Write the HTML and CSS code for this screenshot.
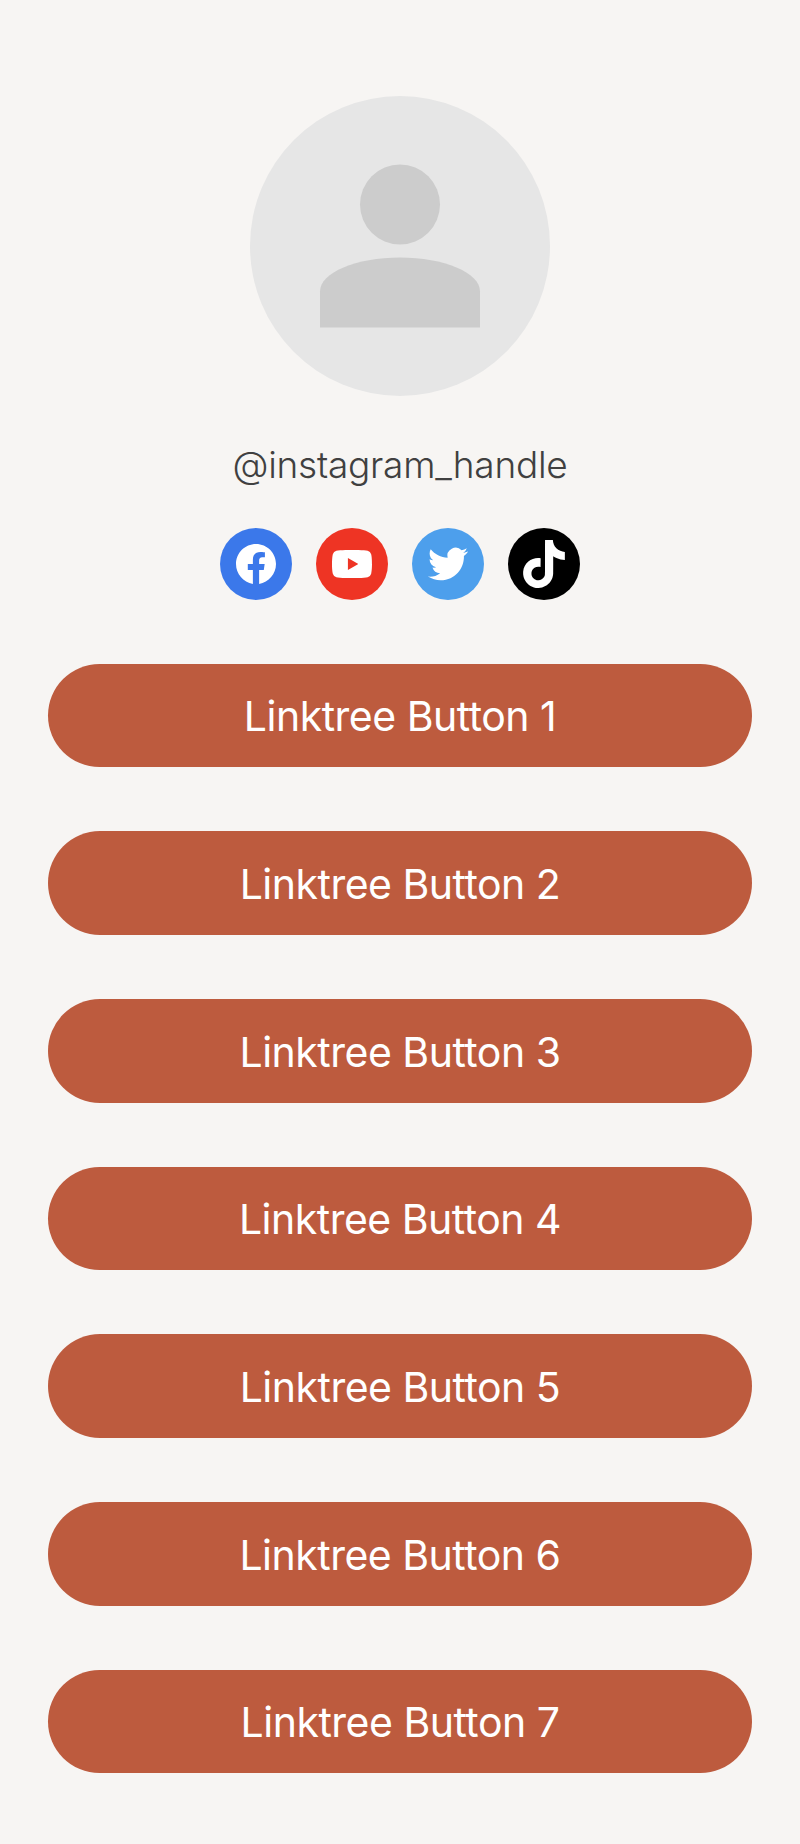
FILE: index.html
```html
<!DOCTYPE html>
<html lang="en">
<head>
<meta charset="utf-8">
<title>Linktree</title>
<link rel="stylesheet" href="styles.css">
</head>
<body>
<main class="page">
  <svg class="avatar" viewBox="0 0 300 300" aria-hidden="true">
    <circle class="avatar-bg" cx="150" cy="150" r="150"/>
    <circle class="avatar-fg" cx="150" cy="108.5" r="40"/>
    <path class="avatar-fg" d="M70 231.5V195.5C70 176.5 106 161.5 150 161.5S230 176.5 230 195.5V231.5Z"/>
  </svg>
  <p class="handle">@instagram_handle</p>
  <div class="socials">
    <a class="social facebook" href="#"><svg class="glyph" viewBox="0 0 24 24"><path d="M24 12.073c0-6.627-5.373-12-12-12s-12 5.373-12 12c0 5.99 4.388 10.954 10.125 11.854v-8.385H7.078v-3.47h3.047V9.43c0-3.007 1.792-4.669 4.533-4.669 1.312 0 2.686.235 2.686.235v2.953H15.83c-1.491 0-1.956.925-1.956 1.874v2.25h3.328l-.532 3.47h-2.796v8.385C19.612 23.027 24 18.062 24 12.073z"/></svg></a>
    <a class="social youtube" href="#"><svg class="glyph" viewBox="0 0 24 24"><path d="M23.498 6.186a3.016 3.016 0 0 0-2.122-2.136C19.505 3.545 12 3.545 12 3.545s-7.505 0-9.377.505A3.017 3.017 0 0 0 .502 6.186C0 8.07 0 12 0 12s0 3.93.502 5.814a3.016 3.016 0 0 0 2.122 2.136c1.871.505 9.376.505 9.376.505s7.505 0 9.377-.505a3.015 3.015 0 0 0 2.122-2.136C24 15.93 24 12 24 12s0-3.93-.502-5.814zM9.545 15.568V8.432L15.818 12l-6.273 3.568z"/></svg></a>
    <a class="social twitter" href="#"><svg class="glyph" viewBox="0 0 24 24"><path d="M23.953 4.57a10 10 0 01-2.825.775 4.958 4.958 0 002.163-2.723c-.951.555-2.005.959-3.127 1.184a4.92 4.92 0 00-8.384 4.482C7.69 8.095 4.067 6.13 1.64 3.162a4.822 4.822 0 00-.666 2.475c0 1.71.87 3.213 2.188 4.096a4.904 4.904 0 01-2.228-.616v.06a4.923 4.923 0 003.946 4.827 4.996 4.996 0 01-2.212.085 4.936 4.936 0 004.604 3.417 9.867 9.867 0 01-6.102 2.105c-.39 0-.779-.023-1.17-.067a13.995 13.995 0 007.557 2.209c9.053 0 13.998-7.496 13.998-13.985 0-.21 0-.42-.015-.63A9.935 9.935 0 0024 4.59z"/></svg></a>
    <a class="social tiktok" href="#"><svg class="glyph glyph-tall" viewBox="0 0 24 24"><path d="M12.525.02c1.31-.02 2.61-.01 3.91-.02.08 1.53.63 3.09 1.75 4.17 1.12 1.11 2.7 1.62 4.24 1.79v4.03c-1.44-.05-2.89-.35-4.2-.97-.57-.26-1.1-.59-1.62-.93-.01 2.92.01 5.84-.02 8.75-.08 1.4-.54 2.79-1.35 3.94-1.31 1.92-3.58 3.17-5.91 3.21-1.43.08-2.86-.31-4.08-1.03-2.02-1.19-3.44-3.37-3.65-5.71-.02-.5-.03-1-.01-1.49.18-1.9 1.12-3.72 2.58-4.96 1.66-1.44 3.98-2.13 6.15-1.72.02 1.48-.04 2.96-.04 4.44-.99-.32-2.15-.23-3.02.37-.63.41-1.11 1.04-1.36 1.75-.21.51-.15 1.07-.14 1.61.24 1.64 1.82 3.02 3.5 2.87 1.12-.01 2.19-.66 2.77-1.61.19-.33.4-.67.41-1.06.1-1.79.06-3.57.07-5.36.01-4.03-.01-8.05.02-12.07z"/></svg></a>
  </div>
  <nav class="links">
    <a class="link" href="#">Linktree Button 1</a>
    <a class="link" href="#">Linktree Button 2</a>
    <a class="link" href="#">Linktree Button 3</a>
    <a class="link" href="#">Linktree Button 4</a>
    <a class="link" href="#">Linktree Button 5</a>
    <a class="link" href="#">Linktree Button 6</a>
    <a class="link" href="#">Linktree Button 7</a>
  </nav>
</main>
</body>
</html>
```
FILE: styles.css
```css
html, body {
  margin: 0;
  background: #f7f5f3;
}
.page {
  box-sizing: border-box;
  height: 1844px;
  padding: 96px 48px 0;
  display: flex;
  flex-direction: column;
  align-items: center;
  font-family: Inter, "Liberation Sans", sans-serif;
}
.avatar {
  width: 300px;
  height: 300px;
  display: block;
}
.avatar-bg { fill: #e6e6e6; }
.avatar-fg { fill: #cccccc; }
.handle {
  margin: 45px 0 0;
  font-size: 37px;
  line-height: 48px;
  font-weight: 300;
  letter-spacing: -0.25px;
  color: #404040;
}
.socials {
  display: flex;
  gap: 24px;
  margin-top: 39px;
}
.social {
  width: 72px;
  height: 72px;
  border-radius: 50%;
  display: flex;
  align-items: center;
  justify-content: center;
}
.facebook { background: #3b78ea; }
.youtube { background: #ee3424; }
.twitter { background: #4d9fec; }
.tiktok { background: #000000; }
.glyph {
  width: 40px;
  height: 40px;
  fill: #ffffff;
}
.glyph-tall {
  width: 48px;
  height: 48px;
}
.links {
  align-self: stretch;
  display: flex;
  flex-direction: column;
  gap: 64px;
  margin-top: 63.6px;
}
.link {
  box-sizing: border-box;
  height: 103.67px;
  padding-top: 2px;
  border-radius: 52px;
  background: #bd5b3e;
  color: #ffffff;
  font-size: 41px;
  letter-spacing: -0.5px;
  display: flex;
  align-items: center;
  justify-content: center;
  text-decoration: none;
}
```
